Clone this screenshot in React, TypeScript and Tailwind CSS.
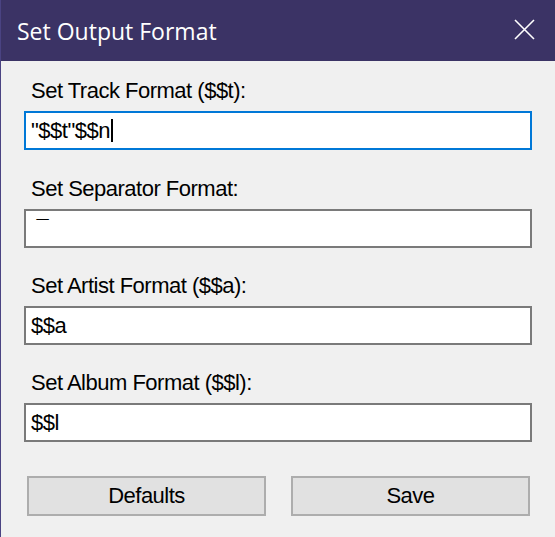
import React from "react";

const labelCls =
  "h-[24px] leading-[24px] text-[22px] tracking-[-0.5px] text-black whitespace-pre";
const font = { fontFamily: '"Liberation Sans", Arial, sans-serif' };

function Field({
  label,
  value,
  focused,
  className,
}: {
  label: string;
  value: string;
  focused?: boolean;
  className?: string;
}) {
  return (
    <div className={"flex flex-col " + (className ?? "")}>
      <div className={labelCls + " pl-[7px]"}>{label}</div>
      <div
        className={
          "mt-[8px] h-[39px] w-[508px] bg-white border-2 flex items-center pl-[5px] " +
          (focused ? "border-[#0078d7]" : "border-[#7a7a7a]")
        }
      >
        <span className="text-[22px] tracking-[-0.5px] leading-[24px] text-black whitespace-pre">
          {value}
        </span>
        {focused && (
          <span className="ml-[1px] inline-block w-[2px] h-[23px] bg-black" />
        )}
      </div>
    </div>
  );
}

export default function App() {
  return (
    <div
      className="w-[555px] h-[537px] bg-[#f0f0f0] border-l border-[#4a4382] flex flex-col overflow-hidden"
      style={font}
    >
      <div className="h-[61px] bg-[#3b3365] flex items-center justify-between pl-[16px] pr-[20px] shrink-0">
        <span
          className="text-white text-[23px] leading-[32px]"
          style={{ fontFamily: '"Open Sans", "Noto Sans", sans-serif' }}
        >
          Set Output Format
        </span>
        <svg width="21" height="21" viewBox="0 0 21 21" className="mt-[-3px]">
          <path
            d="M1 1 L20 20 M20 1 L1 20"
            stroke="#ffffff"
            strokeWidth="1.6"
            fill="none"
          />
        </svg>
      </div>
      <div className="flex flex-col pl-[23px] pt-[18px]">
        <Field label="Set Track Format ($$t):" value={'"$$t"$$n'} focused />
        <Field
          className="mt-[27px]"
          label="Set Separator Format:"
          value={" \u00af"}
        />
        <Field
          className="mt-[26px]"
          label="Set Artist Format ($$a):"
          value="$$a"
        />
        <Field
          className="mt-[26px]"
          label="Set Album Format ($$l):"
          value="$$l"
        />
        <div className="mt-[34px] ml-[3px] w-[503px] flex gap-[25px]">
          <button className="flex-1 h-[40px] bg-[#e1e1e1] border-2 border-[#adadad] text-[22px] tracking-[-0.5px] text-black leading-[24px]">
            Defaults
          </button>
          <button className="flex-1 h-[40px] bg-[#e1e1e1] border-2 border-[#adadad] text-[22px] tracking-[-0.5px] text-black leading-[24px]">
            Save
          </button>
        </div>
      </div>
    </div>
  );
}
